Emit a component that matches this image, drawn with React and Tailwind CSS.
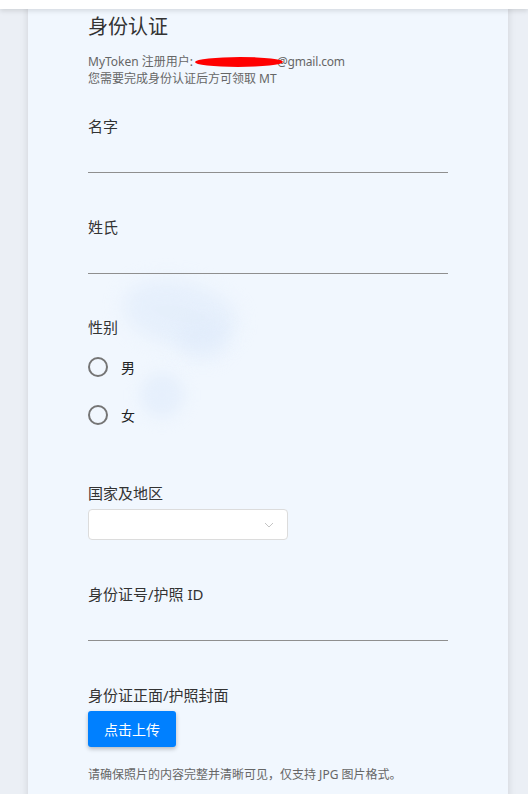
import React from "react";

const font = { fontFamily: '"Noto Sans", "Noto Sans CJK SC", sans-serif' };

const Label = ({ children }) => (
  <p className="text-[15px] leading-[22px] text-[#333]">{children}</p>
);

const LineInput = () => (
  <input
    type="text"
    className="block w-[360px] h-[36px] border-b border-[#8f8f8f] bg-transparent outline-none"
  />
);

const Radio = ({ label }) => (
  <label className="flex items-center h-[48px]">
    <span className="w-5 h-5 rounded-full border-2 border-[#757575] shrink-0" />
    <span className="ml-[13px] text-[14px] text-[#222]">{label}</span>
  </label>
);

export default function App() {
  return (
    <div className="min-h-screen bg-[#ebeff5] overflow-hidden" style={font}>
      {/* top bar */}
      <div className="fixed top-0 left-0 right-0 h-[9px] bg-white shadow-[0_2px_5px_rgba(0,0,0,0.12)] z-20" />

      <div className="relative ml-[28px] w-[480px] bg-[#f1f7fe] shadow-[0_0_8px_rgba(0,0,0,0.12)] pl-[60px] pt-[13px] pb-10">
        {/* faded watermark */}
        <div className="absolute left-[94px] top-[282px] w-[116px] h-[64px] rounded-[50%] bg-[#dbe8fa] blur-[10px] opacity-50 rotate-12" />
        <div className="absolute left-[150px] top-[320px] w-[50px] h-[40px] rounded-full bg-[#dbe8fa] blur-[9px] opacity-40" />
        <div className="absolute left-[112px] top-[372px] w-[44px] h-[46px] rounded-full bg-[#dbe8fa] blur-[8px] opacity-50" />

        <div className="relative">
          <h1 className="text-[20px] leading-[28px] text-[#333]">身份认证</h1>
          <div className="mt-3 text-[12px] leading-[17px] text-[#666]">
            <p className="flex items-center">
              <span>MyToken 注册用户:</span>
              <span className="inline-block ml-[2px] w-[88px] h-[10px] bg-[#ff0000] rounded-[50%] -skew-x-12" />
              <span className="-ml-[6px] tracking-[-0.2px]">@gmail.com</span>
            </p>
            <p>您需要完成身份认证后方可领取 MT</p>
          </div>

          <div className="mt-[28px]">
            <Label>名字</Label>
            <LineInput />
          </div>

          <div className="mt-[43px]">
            <Label>姓氏</Label>
            <LineInput />
          </div>

          <div className="mt-[42px]">
            <Label>性别</Label>
            <div className="mt-[5px]">
              <Radio label="男" />
              <Radio label="女" />
            </div>
          </div>

          <div className="mt-[43px]">
            <Label>国家及地区</Label>
            <div className="mt-[5px] w-[200px] h-[31px] bg-white border border-[#dcdcdc] rounded-[4px] flex items-center justify-end pr-[13px]">
              <svg width="10" height="6" viewBox="0 0 10 6" fill="none">
                <polyline points="1,1 5,5 9,1" stroke="#c4c4c4" strokeWidth="1" />
              </svg>
            </div>
          </div>

          <div className="mt-[43px]">
            <Label>身份证号/护照 ID</Label>
            <LineInput />
          </div>

          <div className="mt-[43px]">
            <Label>身份证正面/护照封面</Label>
            <button className="mt-[5px] w-[88px] h-[36px] bg-[#0080ff] text-white text-[14px] rounded-[3px] shadow-[0_2px_4px_rgba(0,0,0,0.25)]">
              点击上传
            </button>
            <p className="mt-[19px] text-[12px] leading-[17px] text-[#666]">
              请确保照片的内容完整并清晰可见，仅支持 JPG 图片格式。
            </p>
          </div>
        </div>
      </div>
    </div>
  );
}
